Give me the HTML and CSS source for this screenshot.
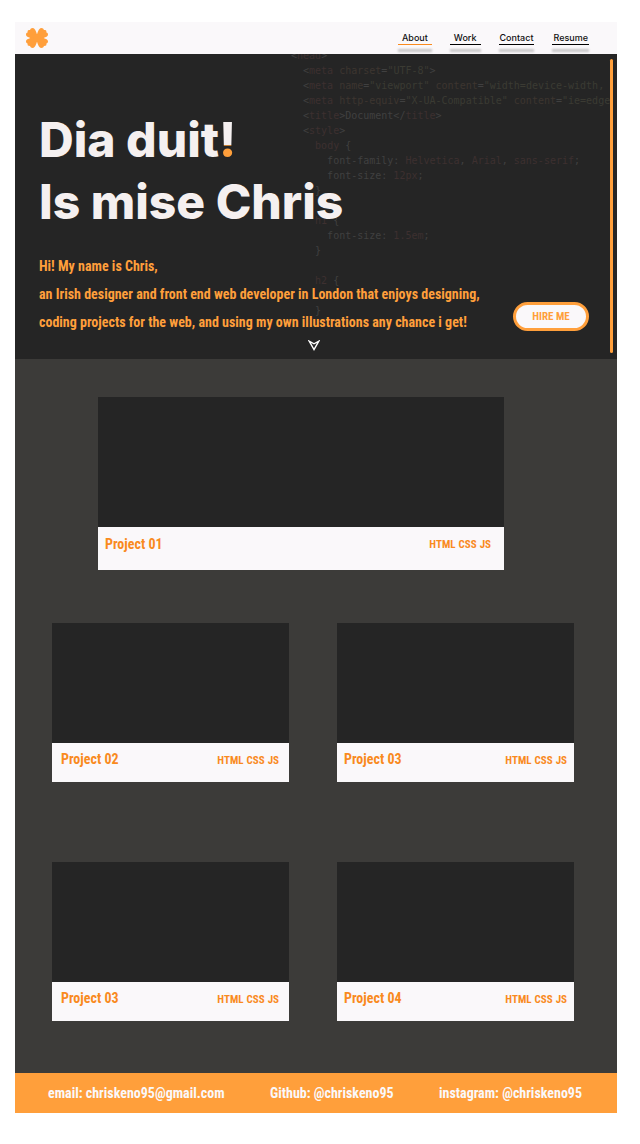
FILE: index.html
```html
<!DOCTYPE html>
<html lang="en">
<head>
<meta charset="UTF-8">
<meta name="viewport" content="width=device-width, initial-scale=1">
<title>Chris – designer and front end developer</title>
<link rel="stylesheet" href="styles.css">
</head>
<body>
<div class="page">
  <header class="topbar">
    <a class="logo" href="#" aria-label="Home">
      <svg viewBox="-11 -10 22 20" width="22" height="20" aria-hidden="true">
        <defs>
          <path id="leaf" d="M-1 1C0-4.500 1.600-10 4.300-10 5.800-10 6.600-9.200 7-8 9-8 9.800-7.400 9.300-5.800 10.300-5.300 11-4.700 11-3.600 11-1.400 8-.6 5 .4Z"/>
        </defs>
        <g fill="#ff9f3b">
          <use href="#leaf"/>
          <use href="#leaf" transform="scale(-1 1)"/>
          <use href="#leaf" transform="scale(1 -1)"/>
          <use href="#leaf" transform="scale(-1 -1)"/>
          <circle r="4"/>
        </g>
      </svg>
    </a>
    <nav class="nav">
      <a class="nav-link nav-link-active" href="#about">About</a>
      <a class="nav-link" href="#work">Work</a>
      <a class="nav-link nav-link-tight" href="#contact">Contact</a>
      <a class="nav-link nav-link-tight" href="#resume">Resume</a>
    </nav>
  </header>

  <section class="hero" id="about">
    <pre class="code" aria-hidden="true">&lt;<i>head</i>&gt;
  &lt;<i>meta</i> <b>charset</b>=<u>"UTF-8"</u>&gt;
  &lt;<i>meta</i> <b>name</b>=<u>"viewport"</u> <b>content</b>=<u>"width=device-width,</u>
  &lt;<i>meta</i> <b>http-equiv</b>=<u>"X-UA-Compatible"</u> <b>content</b>=<u>"ie=edge</u>
  &lt;<i>title</i>&gt;Document&lt;/<i>title</i>&gt;
  &lt;<i>style</i>&gt;
    <i>body</i> {
      font-family: <i>Helvetica</i>, <i>Arial</i>, <i>sans-serif</i>;
      font-size: <i>12px</i>;
    }

    <i>h1</i> {
      font-size: <i>1.5em</i>;
    }

    <i>h2</i> {

    }</pre>
    <div class="hero-body">
      <h1 class="hero-title">Dia duit<span class="bang">!</span><br>Is mise Chris</h1>
      <div class="hero-row">
        <p class="hero-text">Hi! My name is Chris,<br>an Irish designer and front end web developer in London that enjoys designing,<br>coding projects for the web, and using my own illustrations any chance i get!</p>
        <button class="hire" type="button">HIRE ME</button>
      </div>
    </div>
    <a class="scroll-down" href="#work" aria-label="Scroll to work">
      <svg viewBox="0 0 12 11" width="12" height="11" aria-hidden="true"><path fill="none" stroke="#fff" stroke-width="1.400" d="M1.200 1.200 6 9.500 10.800 1.200 6 3.800Z"/></svg>
    </a>
  </section>

  <main class="work" id="work">
    <article class="card card-wide">
      <div class="card-media"></div>
      <div class="card-caption"><h2 class="card-title">Project 01</h2><p class="card-tags"><span>HTML</span><span>CSS</span><span>JS</span></p></div>
    </article>
    <article class="card">
      <div class="card-media"></div>
      <div class="card-caption"><h2 class="card-title">Project 02</h2><p class="card-tags"><span>HTML</span><span>CSS</span><span>JS</span></p></div>
    </article>
    <article class="card card-right">
      <div class="card-media"></div>
      <div class="card-caption"><h2 class="card-title">Project 03</h2><p class="card-tags"><span>HTML</span><span>CSS</span><span>JS</span></p></div>
    </article>
    <article class="card card-lower">
      <div class="card-media"></div>
      <div class="card-caption"><h2 class="card-title">Project 03</h2><p class="card-tags"><span>HTML</span><span>CSS</span><span>JS</span></p></div>
    </article>
    <article class="card card-right card-lower">
      <div class="card-media"></div>
      <div class="card-caption"><h2 class="card-title">Project 04</h2><p class="card-tags"><span>HTML</span><span>CSS</span><span>JS</span></p></div>
    </article>
  </main>

  <footer class="footer" id="contact">
    <a class="footer-link" href="mailto:chriskeno95@gmail.com">email: chriskeno95@gmail.com</a>
    <a class="footer-link" href="#github">Github: @chriskeno95</a>
    <a class="footer-link" href="#instagram">instagram: @chriskeno95</a>
  </footer>
</div>
</body>
</html>
```
FILE: styles.css
```css
* { box-sizing: border-box; }

body {
  margin: 0;
  background: #fff;
  font-family: "Roboto Condensed", "Liberation Sans Narrow", "Open Sans", sans-serif;
  font-weight: 700;
}

h1, h2, p, pre { margin: 0; }
a { color: inherit; text-decoration: none; }

.page { margin: 22px 23px 31px 15px; }

.topbar {
  display: flex;
  align-items: flex-start;
  justify-content: space-between;
  height: 32px;
  padding: 6px 28px 0 11px;
  background: #faf8fa;
}

.logo svg { display: block; }

.nav {
  display: flex;
  gap: 18px;
  padding-top: 4px;
  font: 500 9px/12px Inter, sans-serif;
  color: #111;
}

.nav-link {
  position: relative;
  padding: 0 4px;
  border-bottom: 1px solid #000;
}

.nav-link::after {
  content: "";
  position: absolute;
  top: 17px;
  left: 0;
  right: 0;
  height: 3px;
  background: rgba(0, 0, 0, 0.2);
  filter: blur(1px);
}

.nav-link-tight { padding: 0 1px; }
.nav-link-active { border-bottom-color: #f98a1d; }

.hero {
  position: relative;
  overflow: hidden;
  padding: 55px 28px 8px 24px;
  background: #252525;
}

.hero::after {
  content: "";
  position: absolute;
  top: 5px;
  right: 4px;
  bottom: 6px;
  width: 3px;
  border-radius: 2px;
  background: #ff9f3b;
}

.code {
  position: absolute;
  top: -6px;
  left: 276px;
  right: 6px;
  overflow: hidden;
  font: 10px/15px "DejaVu Sans Mono", monospace;
  color: #404040;
}

.code i, .code b, .code u {
  font-style: normal;
  font-weight: 400;
  text-decoration: none;
}

.code i { color: #3d3030; }
.code b { color: #3d3530; }
.code u { color: #3b3b33; }

.hero-body { position: relative; }

.hero-title {
  font: 800 48px/62px Inter, sans-serif;
  color: #f5f0f0;
}

.bang {
  background: linear-gradient(#f5f0f0 60%, #ff9f3b 60%);
  background-clip: text;
  color: transparent;
}

.hero-row {
  display: flex;
  align-items: flex-end;
  justify-content: space-between;
  margin-top: 19px;
}

.hero-text {
  font-size: 14px;
  line-height: 28px;
  white-space: nowrap;
  color: #ff9f3b;
}

.hire {
  width: 76px;
  height: 29px;
  margin-bottom: 5px;
  padding: 0;
  border: 3px solid #ff9f3b;
  border-radius: 15px;
  background: #faf8fa;
  color: #ff9f3b;
  font: inherit;
  font-size: 11px;
}

.scroll-down {
  display: block;
  width: 12px;
  margin: 4px auto 0;
}

.scroll-down svg { display: block; }

.work {
  display: grid;
  grid-template-columns: 1fr 1fr;
  column-gap: 48px;
  padding: 38px 43px 52px 37px;
  background: #3c3b39;
}

.card-media {
  height: 120px;
  background: #252525;
}

.card-caption {
  display: flex;
  justify-content: space-between;
  height: 39px;
  padding: 6px 10px 0 9px;
  background: #faf8fa;
  color: #f98a1d;
}

.card-title {
  font-size: 14px;
  line-height: 20px;
}

.card-tags {
  display: flex;
  gap: 3px;
  padding-top: 2px;
  font-size: 11px;
  line-height: 20px;
}

.card-right .card-caption { padding: 6px 7px 0; }

.card-wide {
  grid-column: 1 / -1;
  margin: 0 70px 53px 46px;
}

.card-wide .card-media { height: 130px; }

.card-wide .card-caption {
  height: 43px;
  padding: 7px 13px 0 7px;
}

.card-wide .card-tags { padding-top: 1px; }

.card-lower { margin-top: 80px; }

.footer {
  display: flex;
  justify-content: space-between;
  padding: 10px 35px 10px 33px;
  background: #ff9f3b;
  color: #faf8fa;
  font-size: 14px;
  line-height: 20px;
}
```
